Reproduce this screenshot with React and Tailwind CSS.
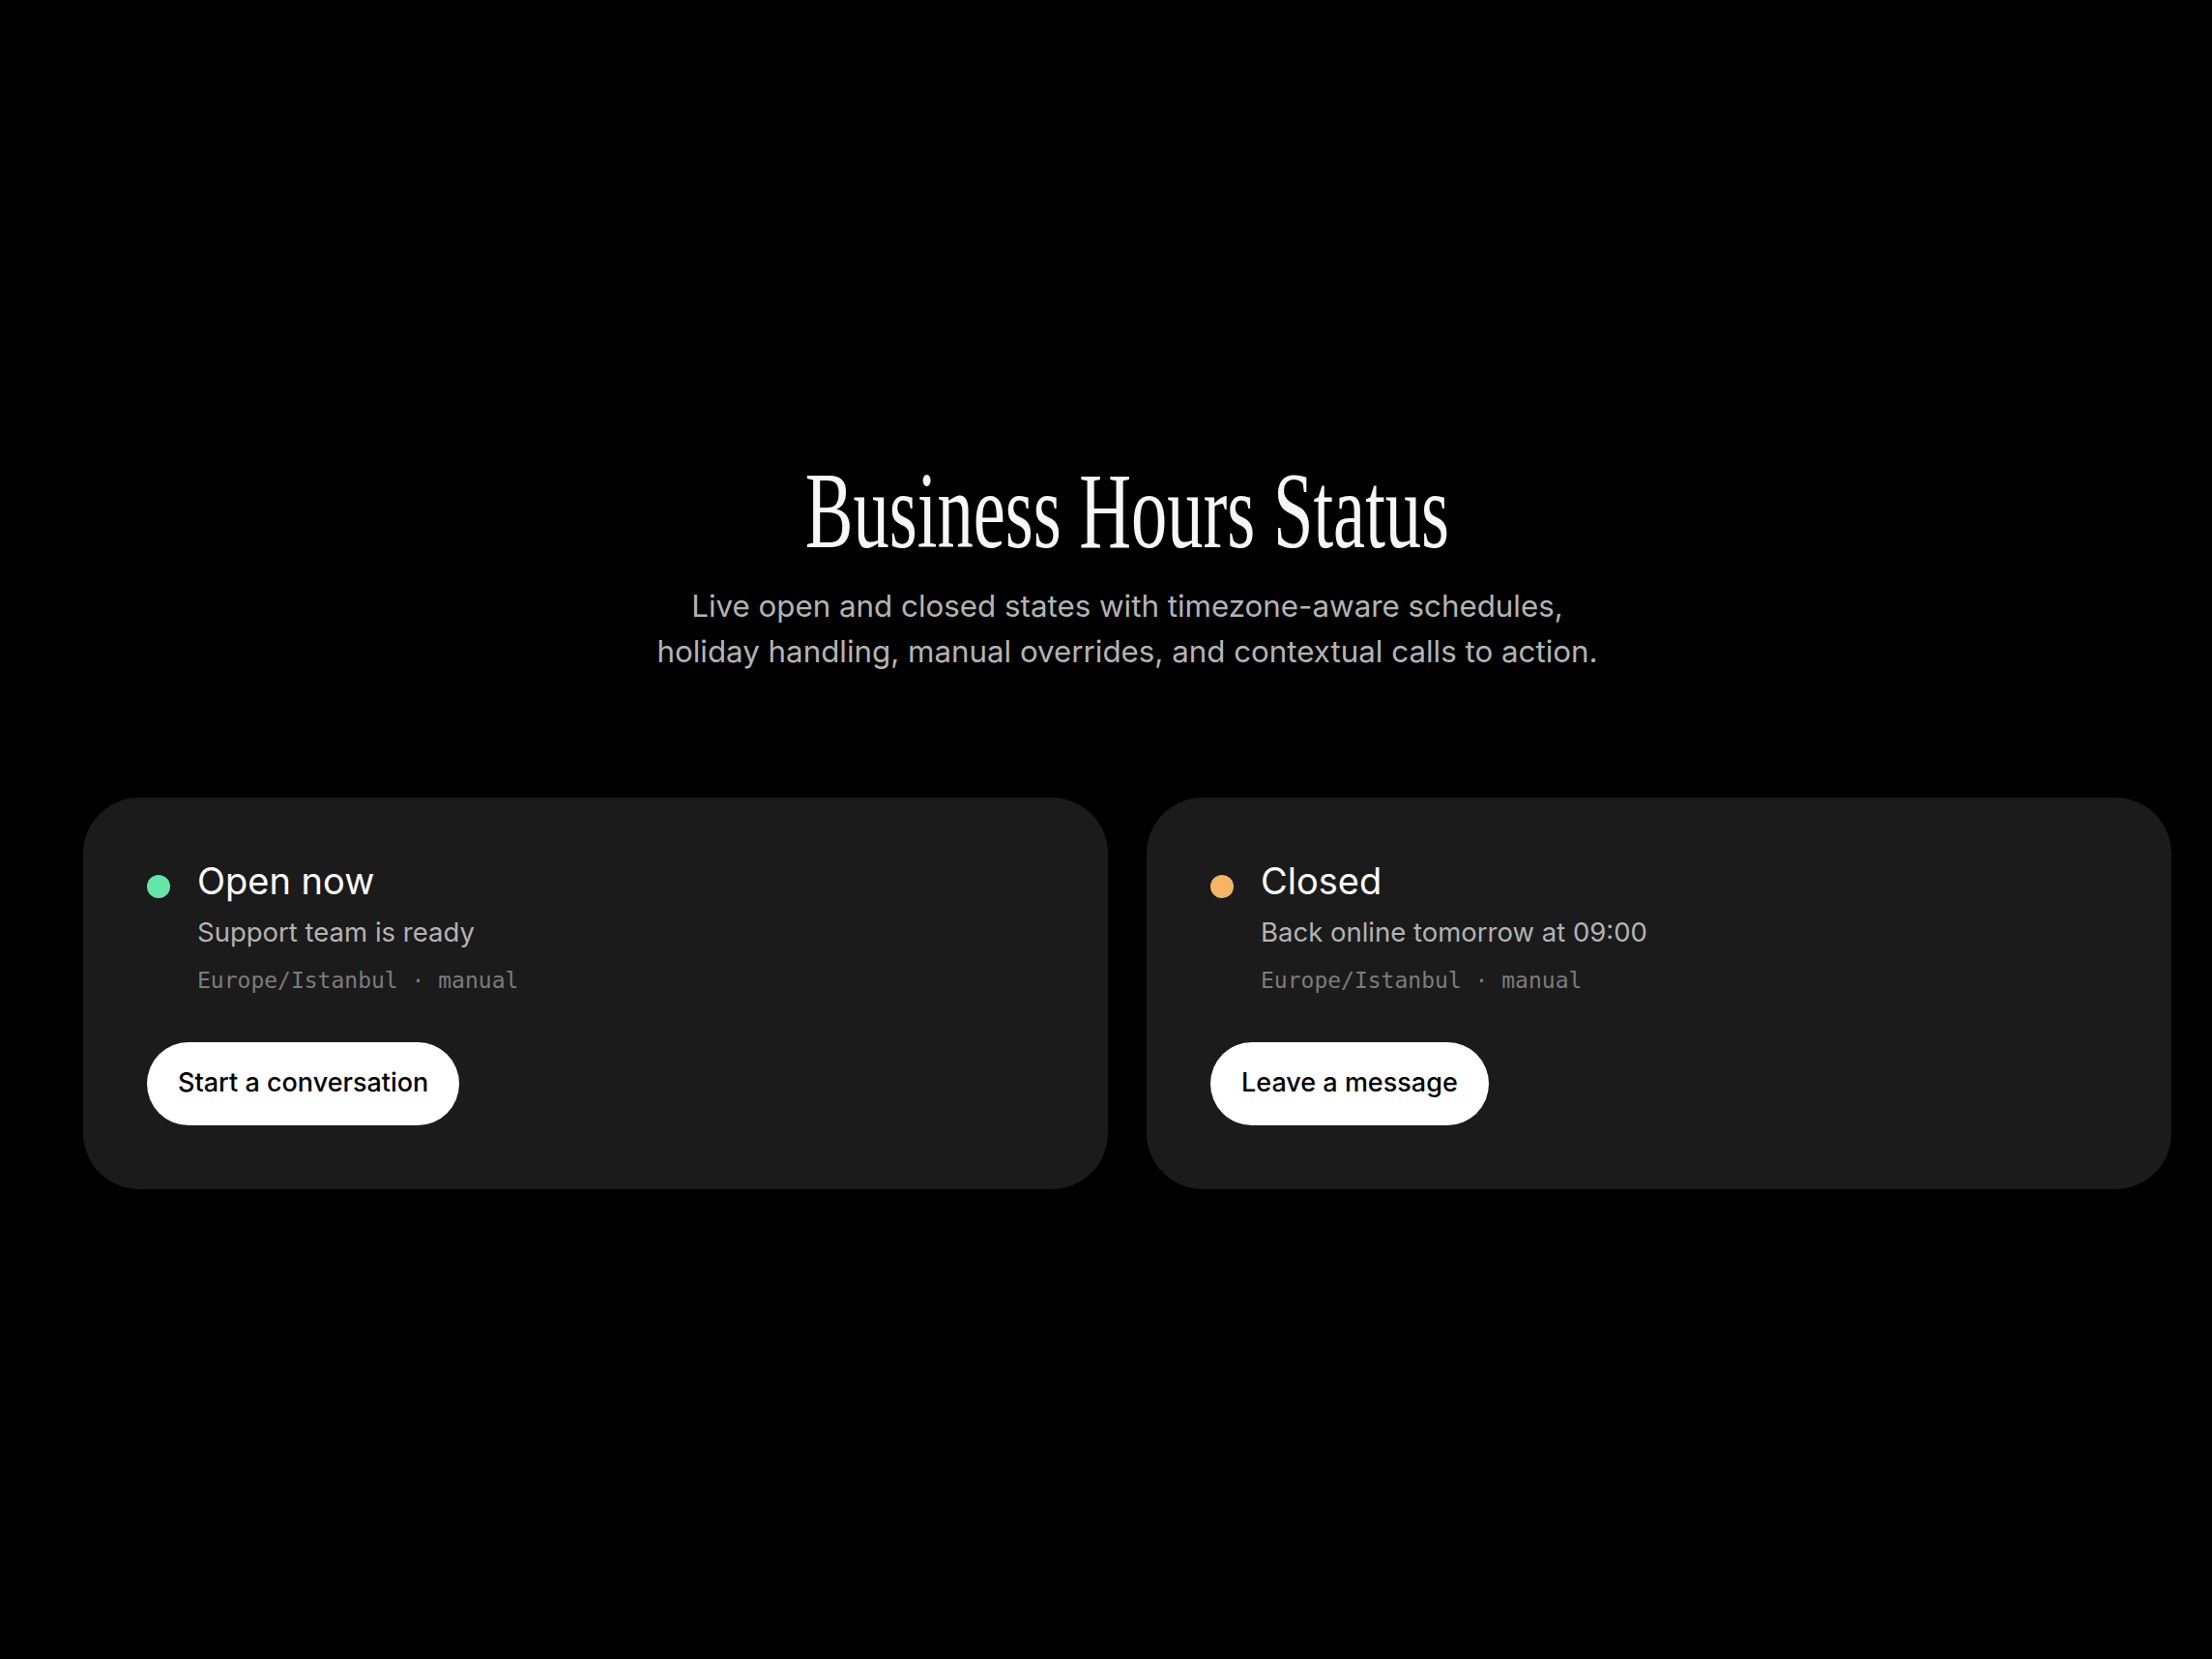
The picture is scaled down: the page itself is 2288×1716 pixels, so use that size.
export default function App() {
  const cards = [
    {
      title: "Open now",
      detail: "Support team is ready",
      dot: "bg-[#64e6a6]",
      action: "Start a conversation",
    },
    {
      title: "Closed",
      detail: "Back online tomorrow at 09:00",
      dot: "bg-[#f7b368]",
      action: "Leave a message",
    },
  ];

  return (
    <div className="min-h-screen bg-black pt-[472px] pb-[200px] pl-[86px] pr-[42px] font-['Inter',sans-serif] text-white">
      <div className="flex flex-col items-center text-center">
        <h1 className="inline-block scale-x-[0.665] font-['Liberation_Serif',serif] text-[112px] leading-none font-normal whitespace-nowrap text-[#f7f7f7]">
          Business Hours Status
        </h1>
        <p className="mt-[20px] max-w-[1060px] text-[31.3px] leading-[1.49] text-[#b4b4b4]">
          Live open and closed states with timezone-aware schedules,
          <br />
          holiday handling, manual overrides, and contextual calls to action.
        </p>
      </div>

      <div className="mt-[128px] grid grid-cols-2 gap-[40px]">
        {cards.map((card) => (
          <div
            key={card.title}
            className="flex flex-col items-start rounded-[58px] bg-[#1b1b1b] p-[66px]"
          >
            <div className="flex items-start gap-[28px]">
              <span
                className={`mt-[14px] h-[24px] w-[24px] shrink-0 rounded-full ${card.dot}`}
              />
              <div className="flex flex-col">
                <h2 className="text-[38px] leading-[1.1] font-normal text-white">
                  {card.title}
                </h2>
                <p className="mt-[12px] text-[27.5px] leading-[1.4] text-[#b3b3b3]">
                  {card.detail}
                </p>
                <p className="mt-[14px] font-['DejaVu_Sans_Mono',monospace] text-[23px] leading-[1.4] text-[#7c7c7c]">
                  Europe/Istanbul · manual
                </p>
              </div>
            </div>
            <button className="mt-[48px] h-[86px] rounded-full bg-white px-[32px] text-[27px] font-medium text-black">
              {card.action}
            </button>
          </div>
        ))}
      </div>
    </div>
  );
}
